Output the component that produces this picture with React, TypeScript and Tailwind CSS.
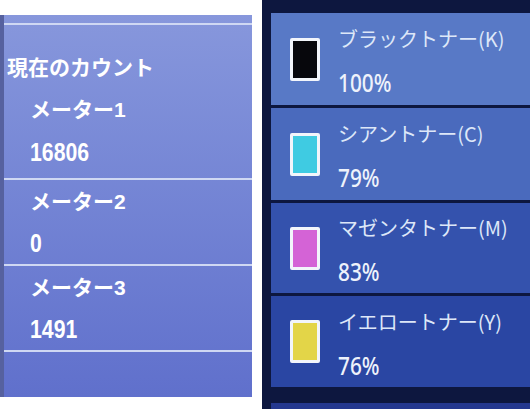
const meters = [
  { label: "メーター2", value: "0" },
  { label: "メーター3", value: "1491" },
];

const toners = [
  { name: "ブラックトナー(K)", pct: "100%", swatch: "bg-[#07070c]", row: "bg-[#5879c6]", h: "h-[92px]" },
  { name: "シアントナー(C)", pct: "79%", swatch: "bg-[#3fcbe2]", row: "bg-[#4a6abd]", h: "h-[92px]" },
  { name: "マゼンタトナー(M)", pct: "83%", swatch: "bg-[#d463d6]", row: "bg-[#3452ad]", h: "h-[90px]" },
  { name: "イエロートナー(Y)", pct: "76%", swatch: "bg-[#e3d548]", row: "bg-[#2a46a3]", h: "h-[91px]" },
];

const sans = "font-['Liberation_Sans','Noto_Sans_CJK_JP',sans-serif]";

function Line() {
  return <div className="h-[2px] bg-[#cfd8f3]" />;
}

export default function App() {
  return (
    <div className={`flex h-[409px] w-[530px] overflow-hidden bg-white ${sans}`}>
      {/* Counter panel */}
      <div className="w-[262px] shrink-0 pt-[15px] pr-[10px]">
        <div className="h-[382px] border-l-4 border-[#56619f] bg-gradient-to-b from-[#8797dc] to-[#6070cc] font-bold text-white">
          <div className="h-[8px]" />
          <Line />
          <div className="pt-[22px]">
            <div className="pl-[3px] text-[21px] leading-[42px]">現在のカウント</div>
            <div className="pl-[26px] text-[21px] leading-[42px]">メーター1</div>
            <div className="pl-[26px] text-[25px] leading-[43px]">
              <span className="inline-block origin-left scale-x-85">16806</span>
            </div>
            <div className="h-[4px]" />
          </div>
          {meters.map((m) => (
            <div key={m.label}>
              <Line />
              <div className="pl-[26px] text-[21px] leading-[43px]">{m.label}</div>
              <div className="pl-[26px] text-[25px] leading-[41px]">
                <span className="inline-block origin-left scale-x-85">{m.value}</span>
              </div>
            </div>
          ))}
          <Line />
        </div>
      </div>

      {/* Toner panel */}
      <div className="flex flex-1 flex-col gap-[3px] bg-[#0d173f] pt-[13px] pl-[9px]">
        {toners.map((t) => (
          <div key={t.name} className={`flex shrink-0 items-center ${t.h} ${t.row} pl-[19px]`}>
            <div className={`h-[43px] w-[30px] shrink-0 rounded-[2px] border-[3px] border-[#f2f5fb] ${t.swatch}`} />
            <div className="ml-[18px] flex flex-col">
              <div className="font-['Noto_Sans_CJK_JP',sans-serif] text-[20px] leading-[46px] text-[#dde7f8]">
                {t.name}
              </div>
              <div className="font-['Noto_Sans',sans-serif] text-[26px] font-medium leading-[40px] text-[#eef2fb]">
                <span className="inline-block origin-left scale-x-80">{t.pct}</span>
              </div>
            </div>
          </div>
        ))}
        <div className="mt-[13px] h-[10px] shrink-0 bg-[#24388f]" />
      </div>
    </div>
  );
}
